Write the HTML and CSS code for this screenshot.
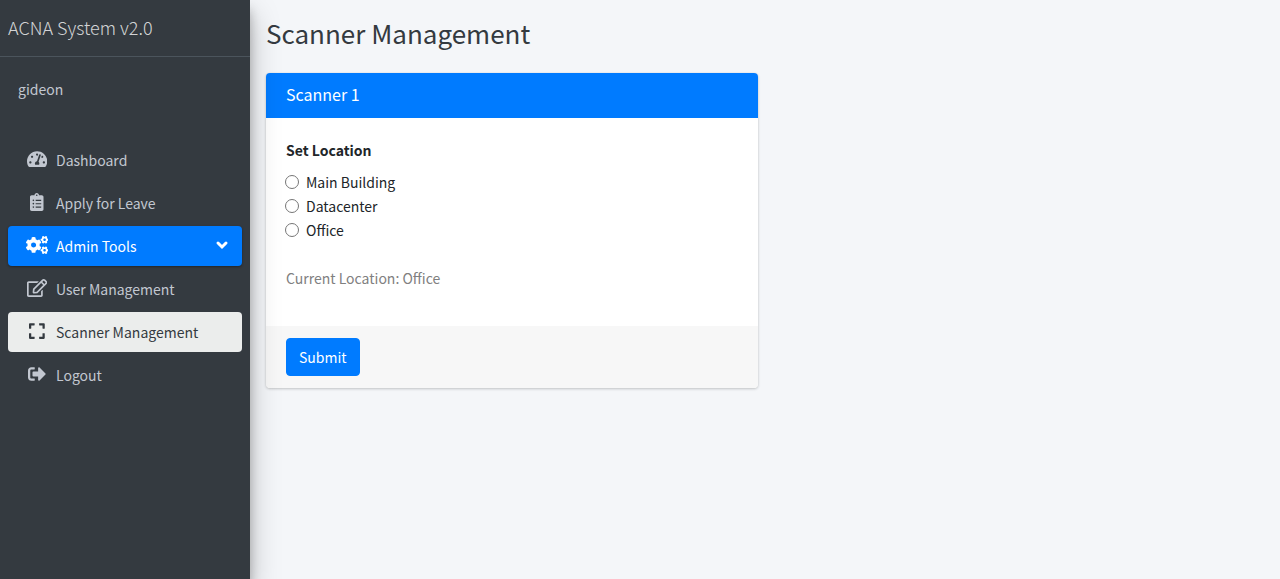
FILE: index.html
```html
<!DOCTYPE html>
<html lang="en">
<head>
<meta charset="utf-8">
<meta name="viewport" content="width=device-width, initial-scale=1">
<title>Scanner Management</title>
<link rel="stylesheet" href="styles.css">
</head>
<body>
<div class="layout">
  <aside class="sidebar">
    <a class="brand" href="#">ACNA System v2.0</a>
    <a class="user" href="#">gideon</a>
    <nav class="menu">
      <a class="menu-item" href="#">
        <span class="menu-icon"><svg class="icon" viewBox="0 0 576 512" aria-hidden="true"><path d="M288 32C128.94 32 0 160.94 0 320c0 52.8 14.25 102.26 39.06 144.8 5.61 9.62 16.3 15.2 27.44 15.2h443c11.14 0 21.83-5.58 27.44-15.2C561.75 422.26 576 372.8 576 320c0-159.06-128.94-288-288-288zm0 64c14.71 0 26.58 10.13 30.32 23.65-1.11 2.26-2.64 4.23-3.45 6.67l-9.22 27.67c-5.13 3.49-10.97 6.01-17.64 6.01-17.67 0-32-14.33-32-32S270.33 96 288 96zM96 384c-17.67 0-32-14.33-32-32s14.33-32 32-32 32 14.33 32 32-14.33 32-32 32zm48-160c-17.67 0-32-14.33-32-32s14.33-32 32-32 32 14.33 32 32-14.33 32-32 32zm246.77-72.41l-61.33 184C343.13 347.33 352 364.54 352 384c0 11.72-3.38 22.55-8.88 32H232.88c-5.5-9.45-8.88-20.28-8.88-32 0-33.94 26.5-61.43 59.9-63.59l61.34-184.01c4.17-12.56 17.73-19.45 30.36-15.17 12.57 4.19 19.35 17.79 15.17 30.36zm14.66 57.2l15.52-46.55c3.47-1.29 7.13-2.23 11.05-2.23 17.67 0 32 14.33 32 32s-14.33 32-32 32c-11.38-.01-20.89-6.28-26.57-15.22zM480 384c-17.67 0-32-14.33-32-32s14.33-32 32-32 32 14.33 32 32-14.33 32-32 32z"/></svg></span>
        <span>Dashboard</span>
      </a>
      <a class="menu-item" href="#">
        <span class="menu-icon"><svg class="icon" viewBox="0 0 384 512" aria-hidden="true"><path d="M336 64h-80c0-35.3-28.7-64-64-64s-64 28.7-64 64H48C21.5 64 0 85.5 0 112v352c0 26.500 21.500 48 48 48h288c26.500 0 48-21.500 48-48V112c0-26.500-21.500-48-48-48zM96 424c-13.300 0-24-10.700-24-24s10.700-24 24-24 24 10.700 24 24-10.700 24-24 24zm0-96c-13.300 0-24-10.700-24-24s10.700-24 24-24 24 10.700 24 24-10.700 24-24 24zm0-96c-13.300 0-24-10.700-24-24s10.700-24 24-24 24 10.700 24 24-10.700 24-24 24zm96-192c13.300 0 24 10.700 24 24s-10.700 24-24 24-24-10.700-24-24 10.700-24 24-24zm128 368c0 4.400-3.600 8-8 8H168c-4.400 0-8-3.600-8-8v-16c0-4.400 3.600-8 8-8h144c4.400 0 8 3.600 8 8v16zm0-96c0 4.400-3.600 8-8 8H168c-4.400 0-8-3.600-8-8v-16c0-4.400 3.600-8 8-8h144c4.400 0 8 3.600 8 8v16zm0-96c0 4.400-3.600 8-8 8H168c-4.400 0-8-3.600-8-8v-16c0-4.400 3.600-8 8-8h144c4.400 0 8 3.600 8 8v16z"/></svg></span>
        <span>Apply for Leave</span>
      </a>
      <a class="menu-item menu-item-open" href="#">
        <span class="menu-icon"><svg class="icon" viewBox="0 0 640 512" aria-hidden="true"><path id="small-gear" d="M512.1 191l-8.200 14.300c-3 5.300-9.400 7.500-15.100 5.400-11.800-4.400-22.600-10.700-32.100-18.600-4.600-3.800-5.800-10.500-2.800-15.700l8.200-14.300c-6.900-8-12.300-17.300-15.900-27.400h-16.500c-6 0-11.200-4.300-12.200-10.300-2-12-2.100-24.600 0-37.100 1-6 6.200-10.400 12.200-10.400h16.500c3.600-10.100 9-19.400 15.900-27.400l-8.200-14.300c-3-5.200-1.900-11.900 2.800-15.700 9.500-7.900 20.400-14.200 32.100-18.600 5.700-2.100 12.100.1 15.100 5.400l8.200 14.300c10.500-1.900 21.200-1.900 31.700 0L552 6.300c3-5.300 9.400-7.500 15.100-5.400 11.800 4.400 22.600 10.700 32.100 18.600 4.600 3.800 5.800 10.500 2.800 15.700l-8.200 14.300c6.900 8 12.300 17.300 15.900 27.400h16.500c6 0 11.200 4.300 12.200 10.300 2 12 2.100 24.600 0 37.100-1 6-6.200 10.400-12.200 10.400h-16.500c-3.600 10.100-9 19.400-15.900 27.400l8.200 14.300c3 5.200 1.900 11.900-2.800 15.700-9.500 7.900-20.400 14.200-32.100 18.600-5.700 2.100-12.100-.1-15.100-5.400l-8.200-14.300c-10.400 1.900-21.200 1.900-31.700 0zm-10.500-58.800c38.500 29.600 82.400-14.300 52.800-52.800-38.500-29.700-82.400 14.300-52.800 52.800z"/><use href="#small-gear" y="299"/><path d="M386.300 286.100l33.700 16.800c10.100 5.800 14.500 18.100 10.500 29.100-8.900 24.200-26.400 46.400-42.600 65.800-7.400 8.900-20.200 11.100-30.300 5.300l-29.100-16.800c-16 13.700-34.600 24.600-54.900 31.700v33.600c0 11.600-8.300 21.600-19.700 23.600-24.600 4.200-50.400 4.400-75.900 0-11.500-2-20-11.900-20-23.600V418c-20.300-7.200-38.900-18-54.900-31.700L74 403c-10 5.800-22.900 3.600-30.300-5.300-16.200-19.400-33.300-41.600-42.200-65.700-4-10.900.4-23.200 10.500-29.100l33.300-16.800c-3.900-20.900-3.900-42.400 0-63.400L12 205.800c-10.100-5.800-14.600-18.100-10.500-29 8.900-24.200 26-46.400 42.200-65.800 7.400-8.900 20.200-11.100 30.300-5.300l29.100 16.800c16-13.700 34.600-24.600 54.900-31.700V57.100c0-11.500 8.200-21.500 19.600-23.500 24.600-4.200 50.500-4.400 76-.1 11.500 2 20 11.900 20 23.600v33.600c20.300 7.200 38.900 18 54.900 31.700l29.100-16.800c10-5.800 22.900-3.600 30.300 5.300 16.200 19.400 33.200 41.600 42.100 65.800 4 10.900.1 23.200-10 29.100l-33.700 16.800c3.900 21 3.900 42.500 0 63.500zm-117.600 21.100c59.200-77-28.700-164.900-105.700-105.700-59.200 77 28.700 164.900 105.700 105.700z"/></svg></span>
        <span>Admin Tools</span>
        <svg class="chevron" viewBox="0 0 16 12" aria-hidden="true"><path d="M4 4l4 4 4-4"/></svg>
      </a>
      <a class="menu-item" href="#">
        <span class="menu-icon"><svg class="icon" viewBox="0 0 576 512" aria-hidden="true"><path d="M402.300 344.900l32-32c5-5 13.700-1.500 13.700 5.700V464c0 26.500-21.500 48-48 48H48c-26.500 0-48-21.500-48-48V112c0-26.500 21.500-48 48-48h273.500c7.100 0 10.700 8.600 5.700 13.700l-32 32c-1.500 1.500-3.500 2.300-5.700 2.300H48v352h352V350.500c0-2.100.8-4.100 2.300-5.600zm156.600-201.800L296.300 405.700l-90.400 10c-26.200 2.900-48.500-19.200-45.600-45.600l10-90.400L432.900 17.100c22.900-22.900 59.900-22.900 82.700 0l43.200 43.200c22.900 22.900 22.900 60 .1 82.800zM460.100 174L402 115.900 216.200 301.800l-7.300 65.300 65.300-7.300L460.100 174zm64.800-79.700l-43.200-43.200c-4.100-4.100-10.800-4.100-14.800 0L436 82l58.100 58.100 30.900-30.900c4-4.200 4-10.800-.1-14.900z"/></svg></span>
        <span>User Management</span>
      </a>
      <a class="menu-item menu-item-current" href="#" aria-current="page">
        <span class="menu-icon"><svg class="icon" viewBox="0 0 448 512" aria-hidden="true"><path d="M0 180V56c0-13.300 10.700-24 24-24h124c6.600 0 12 5.400 12 12v40c0 6.600-5.400 12-12 12H64v84c0 6.600-5.400 12-12 12H12c-6.600 0-12-5.400-12-12zM288 44v40c0 6.600 5.400 12 12 12h84v84c0 6.600 5.400 12 12 12h40c6.600 0 12-5.400 12-12V56c0-13.300-10.700-24-24-24H300c-6.600 0-12 5.400-12 12zm148 276h-40c-6.600 0-12 5.400-12 12v84h-84c-6.600 0-12 5.400-12 12v40c0 6.600 5.400 12 12 12h124c13.300 0 24-10.700 24-24V332c0-6.600-5.400-12-12-12zM160 468v-40c0-6.600-5.400-12-12-12H64v-84c0-6.600-5.400-12-12-12H12c-6.600 0-12 5.400-12 12v124c0 13.300 10.700 24 24 24h124c6.600 0 12-5.400 12-12z"/></svg></span>
        <span>Scanner Management</span>
      </a>
      <a class="menu-item" href="#">
        <span class="menu-icon"><svg class="icon" viewBox="0 0 512 512" aria-hidden="true"><path d="M497 273L329 441c-15 15-41 4.500-41-17v-96H152c-13.300 0-24-10.700-24-24v-96c0-13.300 10.700-24 24-24h136V88c0-21.400 25.900-32 41-17l168 168c9.300 9.400 9.300 24.600 0 34zM192 436v-40c0-6.600-5.400-12-12-12H96c-17.700 0-32-14.300-32-32V160c0-17.700 14.300-32 32-32h84c6.600 0 12-5.400 12-12V76c0-6.600-5.400-12-12-12H96c-53 0-96 43-96 96v192c0 53 43 96 96 96h84c6.600 0 12-5.400 12-12z"/></svg></span>
        <span>Logout</span>
      </a>
    </nav>
  </aside>
  <main class="content">
    <h1 class="page-title">Scanner Management</h1>
    <div class="card-grid">
      <form class="card">
        <h2 class="card-header">Scanner 1</h2>
        <div class="card-body">
          <fieldset class="locations">
            <legend class="locations-title">Set Location</legend>
            <label class="option"><input class="radio" type="radio" name="location" value="main">Main Building</label>
            <label class="option"><input class="radio" type="radio" name="location" value="datacenter">Datacenter</label>
            <label class="option"><input class="radio" type="radio" name="location" value="office">Office</label>
          </fieldset>
          <p class="current">Current Location: Office</p>
        </div>
        <div class="card-footer">
          <button class="submit" type="button">Submit</button>
        </div>
      </form>
    </div>
  </main>
</div>
</body>
</html>
```
FILE: styles.css
```css
*, *::before, *::after {
  box-sizing: border-box;
}

body {
  margin: 0;
  background: #f4f6f9;
  color: #212529;
  font-family: "Noto Sans CJK SC", "Noto Sans", sans-serif;
  font-size: 14px;
  line-height: 24px;
}

.layout {
  display: flex;
  min-height: 100vh;
}

.sidebar {
  position: relative;
  z-index: 1;
  flex: 0 0 250px;
  background: #343a40;
  box-shadow: 0 14px 28px rgba(0, 0, 0, 0.25), 0 10px 10px rgba(0, 0, 0, 0.22);
}

.brand {
  display: block;
  padding: 15px 8px 17px;
  border-bottom: 1px solid #4b545c;
  color: rgba(255, 255, 255, 0.8);
  font-size: 18px;
  font-weight: 300;
  text-decoration: none;
}

.user {
  display: block;
  padding: 20px 18px;
  color: #c2c7d0;
  text-decoration: none;
}

.menu {
  display: flex;
  flex-direction: column;
  gap: 3px;
  padding: 19px 8px;
}

.menu-item {
  display: flex;
  align-items: center;
  height: 40px;
  padding: 0 12px 0 16px;
  border-radius: 4px;
  color: #c2c7d0;
  text-decoration: none;
}

.menu-item-open {
  background: #007bff;
  box-shadow: 0 1px 3px rgba(0, 0, 0, 0.12), 0 1px 2px rgba(0, 0, 0, 0.24);
  color: #fff;
}

.menu-item-current {
  background: #ebedec;
  color: #343a40;
}

.menu-icon {
  display: flex;
  justify-content: center;
  width: 26px;
  margin-right: 6px;
  padding-bottom: 3px;
}

.icon {
  height: 18px;
  fill: currentColor;
}

.chevron {
  width: 16px;
  height: 12px;
  margin: 0 0 2px auto;
  fill: none;
  stroke: currentColor;
  stroke-width: 3;
  stroke-linecap: round;
}

.content {
  flex: 1;
  padding: 16px;
}

.page-title {
  margin: 0 0 23px;
  color: #343a40;
  font-size: 26px;
  font-weight: 400;
  line-height: 34px;
}

.card-grid {
  display: grid;
  grid-template-columns: 1fr 1fr;
  gap: 14px;
}

.card {
  overflow: hidden;
  border-radius: 4px;
  background: #fff;
  box-shadow: 0 0 1px rgba(0, 0, 0, 0.13), 0 1px 3px rgba(0, 0, 0, 0.2);
}

.card-header {
  margin: 0;
  padding: 9px 20px 12px;
  background: #007bff;
  color: #fff;
  font-size: 16px;
  font-weight: 400;
}

.card-body {
  padding: 20px 20px 36px;
}

.locations {
  margin: 0;
  padding: 0;
  border: 0;
}

.locations-title {
  margin-bottom: 8px;
  padding: 0;
  font-weight: 700;
}

.option {
  display: flex;
  align-items: center;
}

.radio {
  width: 14px;
  height: 14px;
  margin: 0 7px 0 -1px;
}

.current {
  margin: 24px 0 0;
  color: #808080;
}

.card-footer {
  padding: 12px 20px;
  background: #f7f7f7;
}

.submit {
  display: block;
  padding: 6px 12px;
  border: 1px solid #007bff;
  border-radius: 4px;
  background: #007bff;
  color: #fff;
  font: inherit;
}
```
